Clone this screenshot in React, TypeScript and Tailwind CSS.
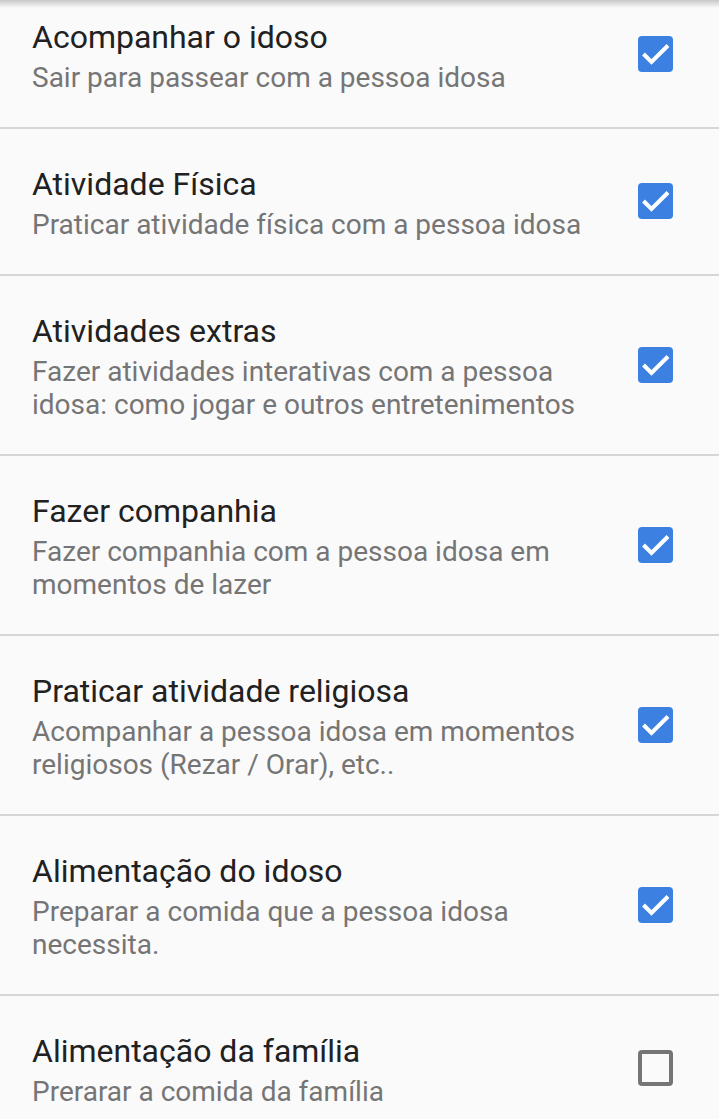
import React from "react";

type Item = {
  title: string;
  subtitle: string;
  checked: boolean;
};

const items: Item[] = [
  { title: "Acompanhar o idoso", subtitle: "Sair para passear com a pessoa idosa", checked: true },
  { title: "Atividade Física", subtitle: "Praticar atividade física com a pessoa idosa", checked: true },
  {
    title: "Atividades extras",
    subtitle: "Fazer atividades interativas com a pessoa idosa: como jogar e outros entretenimentos",
    checked: true,
  },
  {
    title: "Fazer companhia",
    subtitle: "Fazer companhia com a pessoa idosa em momentos de lazer",
    checked: true,
  },
  {
    title: "Praticar atividade religiosa",
    subtitle: "Acompanhar a pessoa idosa em momentos religiosos (Rezar / Orar), etc..",
    checked: true,
  },
  {
    title: "Alimentação do idoso",
    subtitle: "Preparar a comida que a pessoa idosa necessita.",
    checked: true,
  },
  { title: "Alimentação da família", subtitle: "Prerarar a comida da família", checked: false },
];

const CheckBox = ({ checked }: { checked: boolean }) => {
  if (!checked) {
    return <div className="w-[35px] h-[36px] rounded-[4px] border-[4px] border-[#757575] shrink-0" />;
  }
  return (
    <div className="w-[35px] h-[36px] rounded-[4px] bg-[#3c80e2] shrink-0 flex items-center justify-center">
      <svg width="35" height="36" viewBox="0 0 35 36">
        <path d="M5.5 18 L13.5 26 L30 9.5" fill="none" stroke="white" strokeWidth="4" />
      </svg>
    </div>
  );
};

const Row = ({ title, subtitle, checked }: Item) => (
  <div className="flex items-center pl-[32px] pr-[46px] pt-[32px] pb-[33px] border-b-2 border-[#d6d6d6]">
    <div className="flex-1 pr-[30px]">
      <p className="text-[32px] leading-[47px] text-[#212121]">{title}</p>
      <p className="text-[28px] leading-[33px] text-[#757575]">{subtitle}</p>
    </div>
    <CheckBox checked={checked} />
  </div>
);

export default function App() {
  return (
    <div
      className="relative w-[719px] h-[1119px] overflow-hidden bg-[#fafafa]"
      style={{ fontFamily: "Roboto, 'Noto Sans', sans-serif" }}
    >
      <div className="-mt-[18px]">
        {items.map((item) => (
          <Row key={item.title} {...item} />
        ))}
      </div>
      <div className="absolute top-0 left-0 right-0 h-[8px] bg-gradient-to-b from-black/20 to-transparent" />
    </div>
  );
}
